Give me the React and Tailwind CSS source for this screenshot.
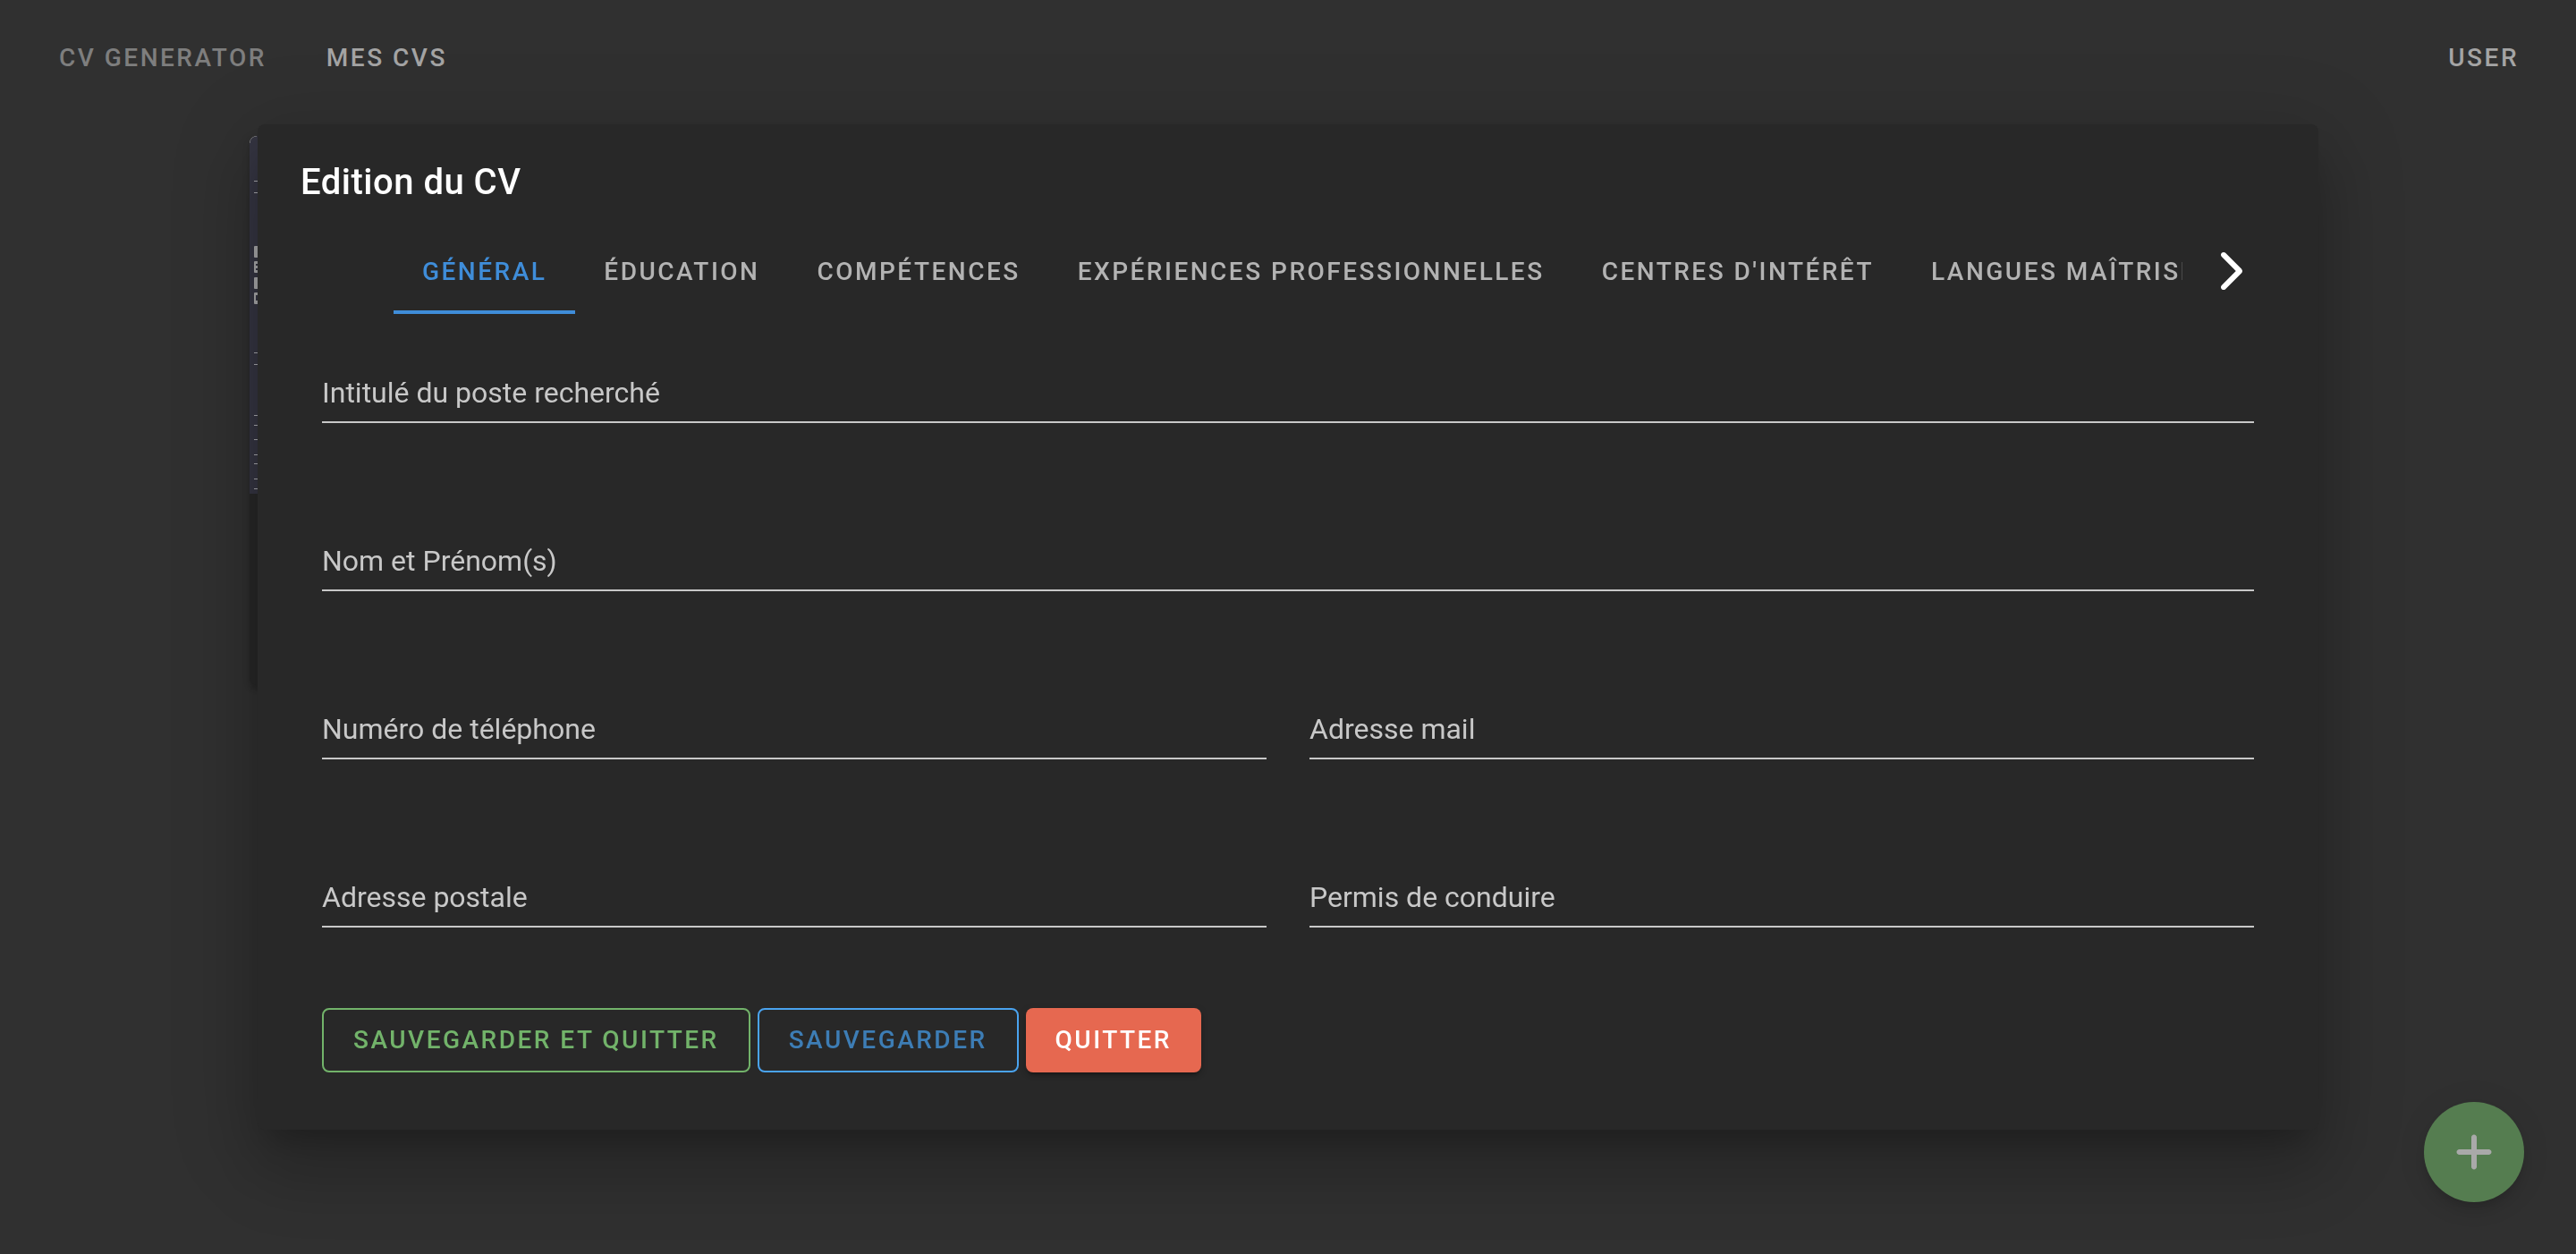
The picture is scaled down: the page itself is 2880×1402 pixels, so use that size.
import { FaChevronRight, FaPlus } from "react-icons/fa6";

const tabs = [
  "Général",
  "Éducation",
  "Compétences",
  "Expériences professionnelles",
  "Centres d'intérêt",
  "Langues maîtrisées",
];

const fields = [
  { id: "poste", label: "Intitulé du poste recherché", wide: true },
  { id: "nom", label: "Nom et Prénom(s)", wide: true },
  { id: "telephone", label: "Numéro de téléphone" },
  { id: "mail", label: "Adresse mail" },
  { id: "adresse", label: "Adresse postale" },
  { id: "permis", label: "Permis de conduire" },
];

const caps = "text-[28px] leading-10 font-medium tracking-[0.089em] uppercase whitespace-nowrap";

function Header() {
  return (
    <header className="flex h-[130px] items-center justify-between px-8">
      <nav className="flex items-center gap-[3px] pl-0.5">
        <a href="#accueil" className={`${caps} px-8 text-[#7e7e7e]`}>CV Generator</a>
        <a href="#cvs" className={`${caps} px-8 text-[#a4a4a4]`}>Mes CVs</a>
      </nav>
      <button type="button" className={`${caps} px-8 text-[#a4a4a4]`}>User</button>
    </header>
  );
}

const thumbLines = [50, 63, 242, 255, 312, 323, 339, 356, 366, 383, 394];
const thumbBlocks = [123, 140, 158, 175];

/* Saved CV card, mostly hidden by the dialog */
function CvCard() {
  return (
    <article className="mt-[22px] ml-[279px] h-[614px] w-[560px] overflow-hidden rounded-lg bg-[#272727] shadow-[0_6px_4px_rgba(0,0,0,0.1),0_4px_8px_rgba(0,0,0,0.1)]">
      <svg viewBox="0 0 560 400" className="block h-[400px] w-full bg-[#353542]" aria-hidden="true">
        {thumbLines.map((y) => (
          <rect key={y} x="5" y={y} width="60" height="1" fill="#a9a9ae" />
        ))}
        {thumbBlocks.map((y) => (
          <rect key={y} x="5" y={y} width="60" height="13" rx="1" fill="#a9a9ab" />
        ))}
        <path d="M7 144h2M7 149h2M8 178v6" stroke="#353542" strokeWidth="2" />
        <path d="M0 8A8 8 0 0 1 8 0" fill="none" stroke="#9a9a9a" strokeWidth="1" />
      </svg>
    </article>
  );
}

function Tabs() {
  return (
    <div className="flex h-24 px-12">
      <div role="tablist" className="ml-26 flex min-w-0 flex-1 overflow-hidden">
        {tabs.map((tab, i) => (
          <button
            key={tab}
            type="button"
            role="tab"
            aria-selected={i === 0}
            className={`${caps} shrink-0 border-b-4 px-8 pt-1.5 ${
              i === 0 ? "border-[#3f8dd9] text-[#3f8dd9]" : "border-transparent text-[#b3b3b3]"
            }`}
          >
            {tab}
          </button>
        ))}
      </div>
      <button type="button" aria-label="Onglets suivants" className="flex w-26 shrink-0 items-center justify-center text-white">
        <FaChevronRight size={48} />
      </button>
    </div>
  );
}

function Field({ id, label, wide }) {
  return (
    <div className={`grid border-b-2 border-[#c8c8c8] ${wide ? "col-span-2" : ""}`}>
      <label htmlFor={id} className="col-start-1 row-start-1 pt-2.5 text-[32px] leading-10 text-[#c8c8c8]">
        {label}
      </label>
      <input id={id} type="text" className="col-start-1 row-start-1 h-[62px] w-full bg-transparent text-[32px] text-white outline-none" />
    </div>
  );
}

function Dialog() {
  return (
    <section
      role="dialog"
      aria-labelledby="dialog-title"
      className="w-4/5 rounded-lg bg-[#282828] shadow-[0_22px_30px_-14px_rgba(0,0,0,0.2),0_48px_76px_6px_rgba(0,0,0,0.14),0_18px_92px_16px_rgba(0,0,0,0.12)]"
    >
      <h1 id="dialog-title" className="px-12 pt-[33px] pb-[19px] text-[40px] leading-16 font-medium tracking-[0.0125em] text-white">
        Edition du CV
      </h1>
      <Tabs />
      <form className="px-18 pt-[58px] pb-16">
        <div className="grid grid-cols-2 gap-x-12 gap-y-31">
          {fields.map((f) => (
            <Field key={f.id} {...f} />
          ))}
        </div>
        <div className="mt-[90px] flex gap-2">
          <button type="button" className={`${caps} h-18 rounded-lg border-2 border-[#72b36a] px-[33px] text-[#72b36a]`}>
            Sauvegarder et quitter
          </button>
          <button type="button" className={`${caps} h-18 rounded-lg border-2 border-[#4aa3ef] px-[33px] text-[#3d7db5]`}>
            Sauvegarder
          </button>
          <button
            type="button"
            className={`${caps} h-18 rounded-lg bg-[#e66850] px-[33px] text-white shadow-[0_6px_2px_-4px_rgba(0,0,0,0.2),0_4px_4px_rgba(0,0,0,0.14),0_2px_10px_rgba(0,0,0,0.12)]`}
          >
            Quitter
          </button>
        </div>
      </form>
    </section>
  );
}

export default function App() {
  return (
    <div className="min-h-screen bg-[#303030] font-[Roboto,sans-serif]">
      <Header />
      <main>
        <CvCard />
      </main>
      <button
        type="button"
        aria-label="Ajouter un CV"
        className="fixed right-[58px] bottom-[58px] flex size-28 items-center justify-center rounded-full bg-[#557d50] text-[#a9a9a9] shadow-[0_6px_10px_-2px_rgba(0,0,0,0.1),0_12px_20px_rgba(0,0,0,0.08),0_2px_36px_rgba(0,0,0,0.07)]"
      >
        <FaPlus size={48} />
      </button>
      <div className="fixed inset-0 flex items-center justify-center">
        <Dialog />
      </div>
    </div>
  );
}
